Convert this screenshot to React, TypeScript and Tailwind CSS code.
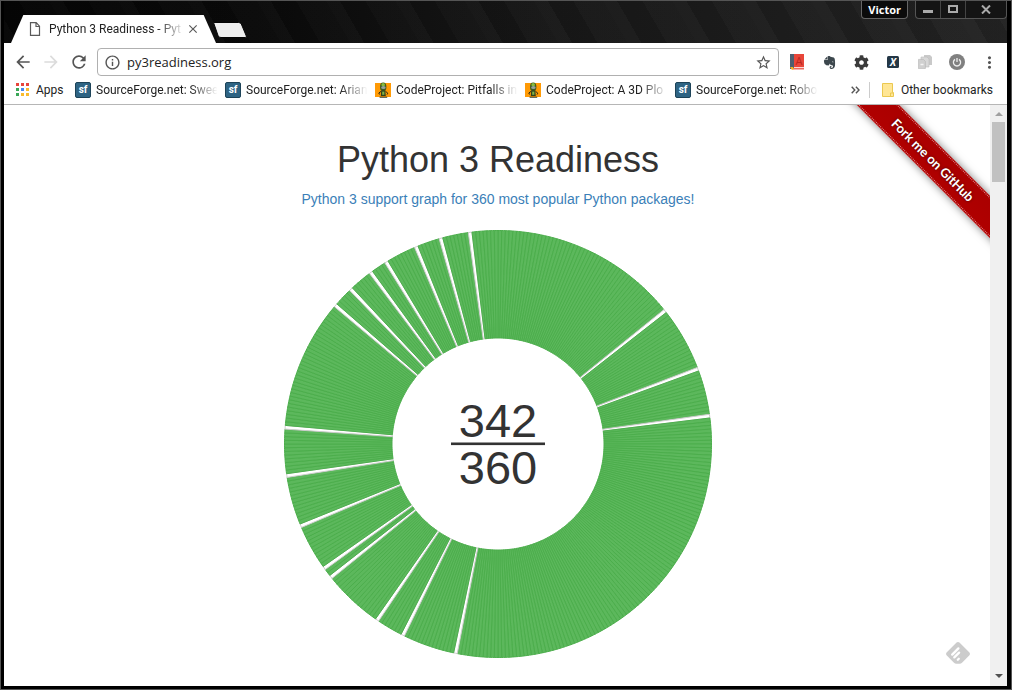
import React from "react";
import {
  MdArrowBack,
  MdArrowForward,
  MdClose,
  MdInfoOutline,
  MdMoreVert,
  MdRefresh,
  MdStarBorder,
} from "react-icons/md";
import { FaCog, FaEvernote } from "react-icons/fa";

const TOTAL = 360;
const READY = 342;
const OUTER = 213.5;
const INNER = 106;
const NOT_READY = new Set([
  51, 69, 82, 191, 206, 214, 231, 234, 247, 261, 274, 310, 316, 323, 328, 337, 344, 352,
]);

function point(radius: number, index: number) {
  const a = (index / TOTAL) * Math.PI * 2;
  return `${(radius * Math.sin(a)).toFixed(3)} ${(-radius * Math.cos(a)).toFixed(3)}`;
}

function slicePath(i: number) {
  return `M${point(OUTER, i)}A${OUTER} ${OUTER} 0 0 1 ${point(OUTER, i + 1)}L${point(INNER, i + 1)}A${INNER} ${INNER} 0 0 0 ${point(INNER, i)}Z`;
}

function ReadinessChart() {
  return (
    <svg
      viewBox="-215 -215 430 430"
      width="430"
      height="430"
      role="img"
      aria-label={`${READY} of ${TOTAL} packages support Python 3`}
      className="mt-5 shrink-0"
    >
      {Array.from({ length: TOTAL }, (_, i) => (
        <path
          key={i}
          d={slicePath(i)}
          fill={NOT_READY.has(i) ? "#ffffff" : "#5cb85c"}
          stroke={NOT_READY.has(i) ? "#cccccc" : "#4cae4c"}
          strokeWidth="1"
        />
      ))}
      <g fill="#333333" fontSize="47" textAnchor="middle">
        <text x="0" y="-7">{READY}</text>
        <text x="0" y="40">{TOTAL}</text>
      </g>
      <rect x="-47" y="-1.5" width="94" height="2.6" fill="#333333" />
    </svg>
  );
}

function TitleBar() {
  return (
    <header className="flex h-[42px] items-start justify-between bg-[repeating-linear-gradient(60deg,rgba(255,255,255,0.02)_0_12px,rgba(0,0,0,0.08)_12px_34px,rgba(255,255,255,0.01)_34px_60px),linear-gradient(90deg,#050505_0%,#0a0a0a_25%,#181818_55%,#242424_100%)]">
      <div className="flex h-full items-end">
        <div className="ml-[7px] flex h-7 w-[205px] items-center bg-white pl-[18px] pr-4 [clip-path:polygon(0_100%,6%_0,94%_0,100%_100%)]">
          <svg width="12" height="14" viewBox="0 0 12 14" className="mr-2 shrink-0">
            <path d="M1.5 .7h5.7l3.3 3.5v9.1h-9z M7 .9v3.6h3.4" fill="none" stroke="#5a5a5a" strokeWidth="1.2" />
          </svg>
          <span className="w-[136px] overflow-hidden whitespace-nowrap font-[Roboto,sans-serif] text-[#222] [mask-image:linear-gradient(90deg,#000_80%,transparent)]">
            Python 3 Readiness - Pyt
          </span>
          <button aria-label="Close tab" className="ml-auto text-[#5a5a5a]">
            <MdClose size={14} />
          </button>
        </div>
        <button aria-label="New tab" className="-ml-1 mb-1 h-[18px] w-9">
          <svg width="36" height="18" viewBox="0 0 36 18">
            <path d="M1.5 1.5h25q2 0 2.8 1.5l5 12q.6 1.5-1 1.5H9q-2 0-2.8-1.5z" fill="#eeeeee" stroke="#050505" />
          </svg>
        </button>
      </div>
      <div className="flex text-white">
        <button className="mr-[7px] h-[18px] rounded-b border border-t-0 border-[#666] bg-[#0b0b0b] px-1.5 text-[11px] font-bold leading-4">
          Victor
        </button>
        <div className="flex h-[18px] rounded-b border border-t-0 border-[#555] bg-[#141414] text-[#b5b5b5]">
          <button aria-label="Minimize" className="flex w-6 items-center justify-center">
            <svg width="10" height="9"><rect y="5" width="10" height="3" fill="#aaaaaa" /></svg>
          </button>
          <button aria-label="Maximize" className="flex w-[26px] items-center justify-center border-x border-[#444]">
            <svg width="10" height="9"><rect x="1" y="1" width="8" height="6" fill="none" stroke="#aaaaaa" strokeWidth="2" /></svg>
          </button>
          <button aria-label="Close" className="flex w-10 items-center justify-center">
            <svg width="10" height="9"><path d="M1 .5l8 8M9 .5l-8 8" stroke="#aaaaaa" strokeWidth="2" /></svg>
          </button>
        </div>
      </div>
    </header>
  );
}

const EXT = "flex w-8 items-center justify-center";

function Toolbar() {
  return (
    <div className="flex h-[38px] items-center pl-[9px] text-[#555]">
      <button aria-label="Back" className="w-7"><MdArrowBack size={20} /></button>
      <button aria-label="Forward" className="w-7 text-[#dcdcdc]"><MdArrowForward size={20} /></button>
      <button aria-label="Reload" className="w-7"><MdRefresh size={20} /></button>
      <div className="flex h-7 min-w-0 flex-1 items-center rounded-sm border border-[#b0b0b0] px-1.5">
        <MdInfoOutline size={17} className="mr-1.5 shrink-0" />
        <input
          aria-label="Address"
          defaultValue="py3readiness.org"
          className="min-w-0 flex-1 bg-transparent text-[13px] text-[#222] outline-none"
        />
        <button aria-label="Bookmark this page"><MdStarBorder size={17} /></button>
      </div>
      <div className="flex pl-[2px] pr-0.5">
        <button aria-label="Dictionary" className={EXT}>
          <svg width="14" height="16" viewBox="0 0 14 16">
            <rect x="3" width="11" height="13.2" fill="#e8463a" />
            <rect width="4" height="15" fill="#4d5f70" />
            <rect x="3" y="14.2" width="11" height="1.2" fill="#e8463a" />
            <text x="9" y="11" textAnchor="middle" fontSize="11" fill="#b9271f">A</text>
            <path d="M0 13h3l1 2-2 1z" fill="#f0b323" />
          </svg>
        </button>
        <button aria-label="Web clipper" className={EXT}><FaEvernote size={15} className="text-[#3c474d]" /></button>
        <button aria-label="Settings" className={EXT}>
          <FaCog size={15} className="text-[#3a3a3a]" />
        </button>
        <button aria-label="Marker" className={EXT}>
          <svg width="12" height="12" viewBox="0 0 12 12">
            <rect width="12" height="12" rx="1.5" fill="#243746" />
            <text x="6" y="9.5" textAnchor="middle" fontSize="10" fontWeight="bold" fontStyle="italic" fill="#ffffff">X</text>
          </svg>
        </button>
        <button aria-label="Copy pages" className={EXT}>
          <svg width="15" height="14" viewBox="0 0 15 14">
            <path d="M6 0h6l2 2v8H6z" fill="#c9c9c9" />
            <path d="M3 2h6l2 2v8H3z" fill="#d8d8d8" stroke="#bcbcbc" strokeWidth=".6" />
            <path d="M.4 4.4h5l2 2v7.2h-7z" fill="#d0d0d0" stroke="#b4b4b4" strokeWidth=".6" />
            <path d="M2.5 9.5h3" stroke="#f4f4f4" strokeWidth="1.5" />
          </svg>
        </button>
        <button aria-label="Power" className={EXT}>
          <svg width="16" height="16" viewBox="0 0 16 16">
            <circle cx="8" cy="8" r="8" fill="#808080" />
            <path d="M6 5.4a3.6 3.6 0 1 0 4 0M8 4v4" fill="none" stroke="#eeeeee" strokeWidth="1.3" />
          </svg>
        </button>
        <button aria-label="Menu" className={EXT}><MdMoreVert size={19} /></button>
      </div>
    </div>
  );
}

function SourceForgeIcon() {
  return (
    <svg width="16" height="16" viewBox="0 0 16 16" className="shrink-0">
      <rect x=".5" y=".5" width="15" height="15" rx="1.5" fill="#2f6483" stroke="#1d4358" />
      <text x="8" y="11" textAnchor="middle" fontSize="10" fontWeight="bold" fill="#ffffff">sf</text>
    </svg>
  );
}

function CodeProjectIcon() {
  return (
    <svg width="16" height="16" viewBox="0 0 16 16" className="shrink-0">
      <rect y="1" width="16" height="14" fill="#ff9a05" />
      <ellipse cx="8.2" cy="5" rx="3.2" ry="4.4" fill="#3d5a20" />
      <ellipse cx="8.2" cy="2.7" rx="1.8" ry="1.8" fill="#86bb3d" />
      <ellipse cx="8.4" cy="5.5" rx="2.3" ry="1.5" fill="#93a19b" />
      <path d="M6.2 8.5h4.2l.4 5.5H5.8z" fill="#30401c" />
      <path d="M7.2 9.6h2.2v3.2H7.2z" fill="#83b442" />
      <path d="M6 9.4L3.8 11l.8 1.5M10.6 9.4l2.2 1.8-.8 1.4M4.6 15.2h7.6" fill="none" stroke="#252a16" strokeWidth="1" />
    </svg>
  );
}

const BOOKMARKS = [
  { site: "sf", title: "SourceForge.net: Swee" },
  { site: "sf", title: "SourceForge.net: Arian" },
  { site: "cp", title: "CodeProject: Pitfalls in" },
  { site: "cp", title: "CodeProject: A 3D Plo" },
  { site: "sf", title: "SourceForge.net: Robo" },
];

const APP_COLORS = ["#e8453c", "#e8453c", "#e8453c", "#3aa757", "#4688f1", "#f9bb2d", "#3aa757", "#f9bb2d", "#f9bb2d"];

function BookmarksBar() {
  return (
    <nav
      aria-label="Bookmarks"
      className="flex h-6 items-center border-b border-[#b6b6b6] pb-1.5 pl-3 pr-3.5 font-[Roboto,sans-serif] text-[#222]"
    >
      <a href="#apps" className="flex w-[59px] shrink-0 items-center gap-[7px]">
        <span className="grid grid-cols-3 gap-0.5">
          {APP_COLORS.map((c, i) => (
            <span key={i} className="size-[3px]" style={{ backgroundColor: c }} />
          ))}
        </span>
        Apps
      </a>
      <div className="flex min-w-0 flex-1 overflow-hidden">
        {BOOKMARKS.map((b) => (
          <a key={b.title} href="#bookmark" className="flex w-[150px] shrink-0 items-center gap-[5px]">
            {b.site === "sf" ? <SourceForgeIcon /> : <CodeProjectIcon />}
            <span className="w-[124px] overflow-hidden whitespace-nowrap [mask-image:linear-gradient(90deg,#000_76%,transparent_98%)]">
              {b.title}
            </span>
          </a>
        ))}
      </div>
      <button aria-label="More bookmarks" className="mr-[9px]">
        <svg width="9" height="8" viewBox="0 0 9 8">
          <path d="M.7 .7L3.8 4 .7 7.3M4.9 .7L8 4 4.9 7.3" fill="none" stroke="#555555" strokeWidth="1.4" />
        </svg>
      </button>
      <a href="#other" className="flex items-center gap-[7px] whitespace-nowrap border-l border-[#ccc] pl-3">
        <svg width="12" height="14" viewBox="0 0 12 14">
          <path d="M.5 .5h10v9h1v4H.5z" fill="#ffe695" stroke="#ebc850" />
          <path d="M8.5 13v-3h2.5" fill="none" stroke="#ebc850" />
        </svg>
        Other bookmarks
      </a>
    </nav>
  );
}

function ForkRibbon() {
  return (
    <div className="pointer-events-none absolute right-0 top-0 size-[150px] overflow-hidden">
      <a
        href="#github"
        className="pointer-events-auto absolute left-[-17px] top-[40px] flex h-[30px] w-[220px] rotate-45 items-center bg-gradient-to-b from-[#aa0000] to-[#b00000] py-px text-white shadow-[0_0_8px_rgba(0,0,0,0.5)]"
      >
        <span className="flex h-full w-full items-center justify-center border-y border-dotted border-[#dd9090] font-[Lato] text-[13px] font-bold [text-shadow:0_0_3px_rgba(0,0,0,0.6)]">
          Fork me on GitHub
        </span>
      </a>
    </div>
  );
}

function FeedlyButton() {
  return (
    <button aria-label="Add to Feedly" className="absolute bottom-[22px] right-5">
      <svg width="24" height="22" viewBox="0 0 24 22">
        <path d="M10.3 .8q1.7-1.5 3.4 0l9.5 9.5q1.5 1.6 0 3.2l-7.2 7.2q-1 1-2.3 1h-3.4q-1.3 0-2.3-1L.8 13.5q-1.5-1.6 0-3.2z" fill="#cccccc" />
        <path d="M6.2 12.6l6.2-6.2M8.3 15.4l4.8-4.8" stroke="#ffffff" strokeWidth="2.3" strokeLinecap="round" />
        <path d="M11.8 17.8l1-1" stroke="#ffffff" strokeWidth="2.3" strokeLinecap="round" />
      </svg>
    </button>
  );
}

function ScrollTrack() {
  return (
    <div className="flex w-[17px] shrink-0 flex-col items-center bg-[#f0f0f0]">
      <button aria-label="Scroll up" className="flex h-[17px] items-center">
        <svg width="8" height="4"><path d="M0 4L4 0l4 4z" fill="#a0a0a0" /></svg>
      </button>
      <div className="h-[60px] w-[13px] bg-[#c1c1c1]" />
      <button aria-label="Scroll down" className="mt-auto flex h-5 items-center">
        <svg width="8" height="4"><path d="M0 0l4 4 4-4z" fill="#505050" /></svg>
      </button>
    </div>
  );
}

export default function App() {
  return (
    <div className="flex h-screen flex-col overflow-hidden border border-[#555] bg-black pb-[3px] pl-[3px] pr-1 font-['Open_Sans',sans-serif] text-[12px] leading-4">
      <TitleBar />
      <div className="flex min-h-0 flex-1 flex-col bg-white">
        <Toolbar />
        <BookmarksBar />
        <div className="flex min-h-0 flex-1">
          <main className="relative flex min-w-0 flex-1 flex-col items-center overflow-hidden pl-0.5 pt-[35px] font-['Liberation_Sans',Arial,sans-serif]">
            <h1 className="text-[36px] leading-10 text-[#333]">Python 3 Readiness</h1>
            <a href="#about" className="mt-[9px] text-[14px] leading-5 text-[#3b7fb8]">
              Python 3 support graph for 360 most popular Python packages!
            </a>
            <ReadinessChart />
            <ForkRibbon />
            <FeedlyButton />
          </main>
          <ScrollTrack />
        </div>
      </div>
    </div>
  );
}
